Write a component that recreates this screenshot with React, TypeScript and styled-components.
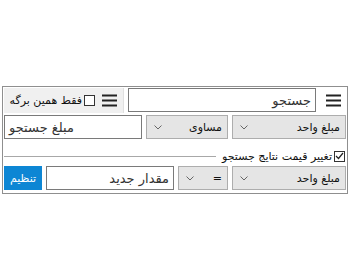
import React from 'react'
import styled, { createGlobalStyle } from 'styled-components'

const GlobalStyle = createGlobalStyle`
  html, body {
    margin: 0;
    padding: 0;
    background: #ffffff;
  }
  body {
    font-family: "DejaVu Sans", Tahoma, sans-serif;
    font-size: 12px;
    color: #1a1a1a;
  }
`

const Page = styled.div`
  height: 280px;
  display: flex;
  align-items: center;
  padding: 0 2px;
  box-sizing: border-box;
`

const Panel = styled.div`
  direction: rtl;
  width: 346px;
  box-sizing: border-box;
  border: 1px solid #8f8f8f;
  padding: 1px 1px 3px 1px;
  display: flex;
  flex-direction: column;
  gap: 3px;
`

const Row = styled.div`
  display: flex;
  align-items: center;
  gap: 4px;
  height: 24px;
`

const MenuButton = styled.div<{ $width?: number }>`
  width: ${p => p.$width ?? 26}px;
  height: 24px;
  display: flex;
  align-items: center;
  justify-content: center;
  flex-shrink: 0;
`

const TextInput = styled.div<{ $width?: number; $alignLeft?: boolean }>`
  ${p => (p.$width ? `width: ${p.$width}px;` : 'flex: 1;')}
  height: 24px;
  box-sizing: border-box;
  border: 1px solid #7a7a7a;
  background: #ffffff;
  display: flex;
  align-items: center;
  justify-content: ${p => (p.$alignLeft ? 'flex-end' : 'flex-start')};
  padding: 0 4px;
  font-size: 13px;
  color: #333;
  flex-shrink: 0;
`

const Toolbar = styled.div`
  width: 124px;
  height: 25px;
  margin-right: auto;
  background: #f0f0f0;
  border-right: 1px solid #e0e0e0;
  display: flex;
  align-items: center;
  gap: 4px;
  padding-right: 4px;
  box-sizing: border-box;
  overflow: hidden;
`

const CheckLabel = styled.label`
  display: flex;
  align-items: center;
  gap: 2px;
  white-space: nowrap;
  font-size: 11px;
  color: #111;
`

const Box = styled.span`
  width: 11px;
  height: 11px;
  border: 1px solid #333;
  background: #fff;
  display: inline-flex;
  align-items: center;
  justify-content: center;
  box-sizing: border-box;
  flex-shrink: 0;
`

const Dropdown = styled.div<{ $width: number }>`
  width: ${p => p.$width}px;
  height: 24px;
  box-sizing: border-box;
  border: 1px solid #adadad;
  background: #e5e5e5;
  display: flex;
  align-items: center;
  justify-content: space-between;
  padding: 0 5px 0 7px;
  font-size: 11px;
  color: #111;
  flex-shrink: 0;
`

const Divider = styled.div`
  flex: 1;
  height: 1px;
  background: #a8a8a8;
  margin-right: 6px;
`

const SectionRow = styled.div`
  display: flex;
  align-items: center;
  height: 14px;
  margin-top: 7px;
  padding-right: 1px;
`

const SetButton = styled.button`
  width: 38px;
  height: 24px;
  border: none;
  background: #0d86d4;
  color: #ffffff;
  font-family: inherit;
  font-size: 11px;
  padding: 0;
  flex-shrink: 0;
`

const Hamburger = () => (
  <svg width="15" height="13" viewBox="0 0 15 13">
    <rect x="0" y="0.5" width="15" height="2" fill="#222" />
    <rect x="0" y="5.5" width="15" height="2" fill="#222" />
    <rect x="0" y="10.5" width="15" height="2" fill="#222" />
  </svg>
)

const Chevron = () => (
  <svg width="8" height="5" viewBox="0 0 8 5">
    <path d="M0.5 0.5 L4 4 L7.5 0.5" stroke="#666" strokeWidth="1" fill="none" />
  </svg>
)

const Select = ({ width, label }: { width: number; label: string }) => (
  <Dropdown $width={width}>
    <span>{label}</span>
    <Chevron />
  </Dropdown>
)

export default function App() {
  return (
    <>
      <GlobalStyle />
      <Page>
        <Panel>
          <Row>
            <MenuButton>
              <Hamburger />
            </MenuButton>
            <TextInput $width={188}>جستجو</TextInput>
            <Toolbar>
              <MenuButton $width={20}>
                <Hamburger />
              </MenuButton>
              <CheckLabel>
                <Box />
                فقط همین برگه
              </CheckLabel>
            </Toolbar>
          </Row>
          <Row>
            <Select width={114} label="مبلغ واحد" />
            <Select width={82} label="مساوی" />
            <TextInput $alignLeft>مبلغ جستجو</TextInput>
          </Row>
          <SectionRow>
            <CheckLabel>
              <Box>
                <svg width="9" height="8" viewBox="0 0 9 8">
                  <path d="M1 4 L3.5 6.5 L8 1" stroke="#222" strokeWidth="1.2" fill="none" />
                </svg>
              </Box>
              تغییر قیمت نتایج جستجو
            </CheckLabel>
            <Divider />
          </SectionRow>
          <Row>
            <Select width={114} label="مبلغ واحد" />
            <Select width={50} label="=" />
            <TextInput $width={128}>مقدار جدید</TextInput>
            <SetButton>تنظیم</SetButton>
          </Row>
        </Panel>
      </Page>
    </>
  )
}
